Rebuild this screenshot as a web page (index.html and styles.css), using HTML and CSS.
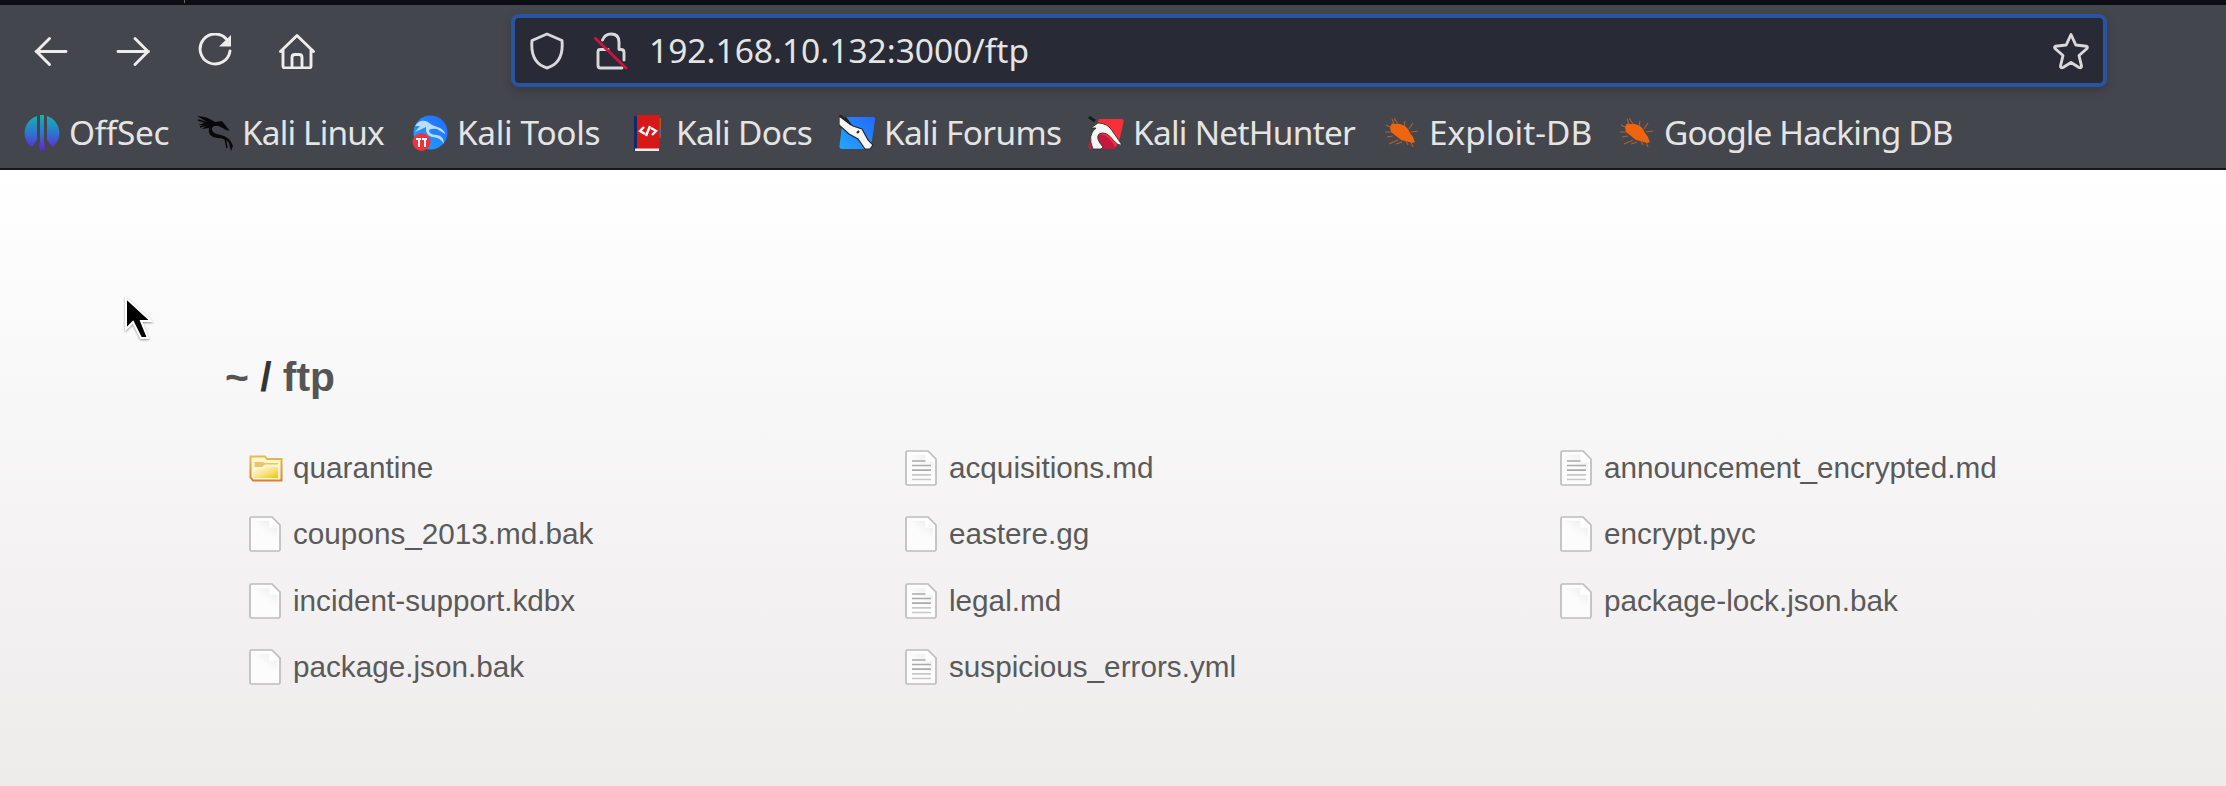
FILE: index.html
```
<!DOCTYPE html>
<html lang="en">
<head>
<meta charset="utf-8">
<title>listing directory /ftp</title>
<link rel="stylesheet" href="styles.css">
</head>
<body>
<svg class="defs" aria-hidden="true">
  <defs>
    <linearGradient id="offsec" x1="0" y1="0" x2="0" y2="1"><stop offset="0" stop-color="#12b5b0"/><stop offset=".5" stop-color="#2d76cf"/><stop offset="1" stop-color="#6a1fd0"/></linearGradient>
    <linearGradient id="blue" x1="0" y1="1" x2="1" y2="0"><stop offset="0" stop-color="#22a7ff"/><stop offset="1" stop-color="#2468ff"/></linearGradient>
    <linearGradient id="gold" x1="0" y1="0" x2="1" y2="1"><stop offset="0" stop-color="#fffbe6"/><stop offset=".5" stop-color="#f9e48c"/><stop offset="1" stop-color="#efc400"/></linearGradient>
    <linearGradient id="goldedge" x1="0" y1="0" x2="0" y2="1"><stop offset="0" stop-color="#e5bd50"/><stop offset="1" stop-color="#dc8030"/></linearGradient>
    <linearGradient id="fold" x1="1" y1="0" x2="0" y2="1"><stop offset="0" stop-color="#dedede"/><stop offset=".55" stop-color="#fafafa"/><stop offset="1" stop-color="#fdfdfd"/></linearGradient>
    <symbol id="page" viewBox="0 0 32 36">
      <path d="M2.5 1H23L31 9V33.5Q31 35 29.5 35H2.500Q1 35 1 33.500V2.500Q1 1 2.500 1Z" fill="#fcfcfc" stroke="#bdbdbd" stroke-width="1.700"/>
      <path d="M5 5H20V12H28V22L18 20Z" fill="url(#fold)" opacity=".6"/>
      <path d="M22 2.500V10H29.500Z" fill="#fff"/>
    </symbol>
    <symbol id="text" viewBox="0 0 32 36">
      <use href="#page"/>
      <path d="M7 11H20.500M7 15.500H26M7 20.200H26" stroke="#aaa" stroke-width="1.700"/>
      <path d="M7 24.800H26M7 29.500H26" stroke="#c8c8c8" stroke-width="1.700"/>
    </symbol>
    <symbol id="folder" viewBox="0 0 34 27">
      <path d="M1.500 1.500H16L18 4H32.500V25.500H4L1.500 22.500Z" fill="#fff5d0" stroke="url(#goldedge)" stroke-width="2"/>
      <path d="M5.500 7H14L16 8H29V9.500H16L13 12H5.500Z" fill="#ecc46c"/>
      <path d="M5 14H14L17 12H29V23H4.500Z" fill="url(#gold)"/>
    </symbol>
    <symbol id="bug" viewBox="0 0 36 36">
      <path d="M6 12 8 8.500 12 9 16 9 21 11 24 14 26 18 29 22 30 25 31 27 28 28 23 26.500 17 25 12 21 7 17Z" fill="#ef650f"/>
      <path d="M10 9 8 4M14 9 10 3M20 11 21 6M6 12 2 10M7 17 1 17M9 21 3 22M14 25 5 29M18 27 12 29M25 14 29 8M27 17 34 16M27 27 29 32M22 26 24 30" fill="none" stroke="#b0602e" stroke-width="1.100"/>
    </symbol>
  </defs>
</svg>

<header class="browser">
  <div class="tabstrip"><i></i></div>
  <div class="toolbar">
    <nav class="nav">
      <svg viewBox="0 0 36 36"><path d="M33 18.500H3M16.500 5.500 3.500 18.500 16.500 31.500"/></svg>
      <svg viewBox="0 0 36 36"><path d="M3 18.500H33.500M20 5.500 33 18.500 20 31.500"/></svg>
      <svg viewBox="0 0 36 36"><path d="M30.500 7.500A15 15 0 1 0 33 18"/><path d="M34 2V13.500H22Z" class="solid"/></svg>
      <svg viewBox="0 0 36 36"><path d="M1.500 18.500 18 2.500 34.500 18.500M4 17V33Q4 35 6 35H30Q32 35 32 33V17M13 35V24.500Q13 21.500 16 21.500H20Q23 21.500 23 24.500V35"/></svg>
    </nav>
    <div class="urlbar">
      <svg class="shield" viewBox="0 0 36 38"><path d="M18 2 33 8.500Q35 31 18 36Q1 31 3 8.500Z"/></svg>
      <svg class="lock" viewBox="0 0 34 38"><path d="M8.500 8Q11 2 17 2Q25 2 25 10V17.500M25 17.500H27Q30 17.500 30 20.500V28M14 17.500H6Q4 17.500 4 20V33.500Q4 36 6.500 36H28"/><path class="slash" d="M1.500 6.500 32 36"/></svg>
      <span class="address">192.168.10.132:3000/ftp</span>
      <svg class="star" viewBox="0 0 38 38"><path d="M19 2.500 23.800 13 34.500 14.200Q36 15 35 16.500L27 23.500 29.500 34Q29.500 36.500 27 35.500L19 30.500 11 35.500Q8.500 36.500 8.500 34L11 23.500 3 16.500Q2 15 3.500 14.200L14.200 13Z"/></svg>
    </div>
  </div>
  <div class="bookmarks">
    <a><svg viewBox="0 0 36 36"><path fill="url(#offsec)" d="M13 1V25L8 32C-3 25-2 6 13 1ZM23 1V25L28 32C39 25 38 6 23 1ZM16 0H20V26L21 34 18 36 15 34 16 26Z"/></svg><span class="snug">OffSec</span></a>
    <a><svg viewBox="0 0 36 36"><path d="M0 1Q10 1 18 7L25 6 33 16 23 11Q14 10 15 15Q16 19 24 20Q33 22 36 31L34 36 32 28Q28 23 20 23Q10 21 12 13L5 14 10 10 1 10 10 7Z" fill="#08090b"/><path d="M1 5 14 9M16 7 31 15M28 23 30 33M3 12 12 9" stroke="#08090b" stroke-width="1.500"/></svg><span class="tightest">Kali Linux</span></a>
    <a><svg viewBox="0 0 36 36"><circle cx="18.500" cy="17.500" r="17" fill="url(#blue)"/><path d="M3 11Q10 1 20 10L28 13Q33 16 33 19L25 14Q17 13 17 16Q18 20 25 20Q32 21 32 29Q28 22 20 22Q13 20 14 12L3 17 8 11Z" fill="#b9dcff"/><circle cx="9.500" cy="27" r="9" fill="#ef3338"/><path d="M4 23H9V25H8V32H6V25H4ZM10 23H15V25H14V32H12V25H10Z" fill="#fff"/></svg><span class="snug">Kali Tools</span></a>
    <a><svg viewBox="0 0 36 36"><path d="M3 1H7V36H3Z" fill="#102a67"/><path d="M6 0H28.500V34H6Z" fill="#d71818"/><path d="M28.500 3H30V23H28.500Z" fill="#a75928"/><path d="M28.500 14H30V20H28.500Z" fill="#386db1"/><path d="M4 33.500H28V36H4Z" fill="#eee"/><path d="M13 12 9 16 14 19M20 13 25 16 21 20M19 11 15 21" fill="none" stroke="#fff" stroke-width="2.400"/></svg><span class="tight">Kali Docs</span></a>
    <a><svg viewBox="0 0 36 36"><path d="M4 2H34Q36.500 2 36 5L32 32Q31 34 29 34H3Q0 34 .5 31Z" fill="url(#blue)"/><path d="M0 1 14 11 23 14 29 25 34 30 31 34 26 34 19 24 10 19 0 10Z" fill="#f5f5f3" stroke="#25272b" stroke-width="1.200"/><path d="M1 0 10 8M6 2 12 10M18 18 20 16" stroke="#222" stroke-width="2"/></svg><span class="tight">Kali Forums</span></a>
    <a><svg viewBox="0 0 36 36"><path d="M11 4H34Q36 4 35.500 7L31 27 26 34H3Q0 34 1 28Z" fill="#f92f38"/><path d="M10 20Q20 17 28 34H3Q0 32 1 27Z" fill="#c5183f"/><path d="M1 2 7 6" stroke="#18191c" stroke-width="3"/><path d="M5 34Q-1 20 8 13L3 13 10 8Q20 8 25 17L34 30Q30 31 26 26Q18 15 11 19Q7 23 15 32L13 34Z" fill="#f6f6f6" stroke="#242328" stroke-width=".8"/></svg><span class="tighter">Kali NetHunter</span></a>
    <a><svg><use href="#bug"/></svg><span>Exploit-DB</span></a>
    <a><svg><use href="#bug"/></svg><span class="tightest">Google Hacking DB</span></a>
  </div>
</header>

<main class="page">
  <h1><a>~</a> / <a>ftp</a></h1>
  <ul class="files">
    <li><svg class="dir"><use href="#folder"/></svg><span>quarantine</span></li>
    <li><svg><use href="#text"/></svg><span>acquisitions.md</span></li>
    <li><svg><use href="#text"/></svg><span>announcement_encrypted.md</span></li>
    <li><svg><use href="#page"/></svg><span>coupons_2013.md.bak</span></li>
    <li><svg><use href="#page"/></svg><span>eastere.gg</span></li>
    <li><svg><use href="#page"/></svg><span>encrypt.pyc</span></li>
    <li><svg><use href="#page"/></svg><span>incident-support.kdbx</span></li>
    <li><svg><use href="#text"/></svg><span>legal.md</span></li>
    <li><svg><use href="#page"/></svg><span>package-lock.json.bak</span></li>
    <li><svg><use href="#page"/></svg><span>package.json.bak</span></li>
    <li><svg><use href="#text"/></svg><span>suspicious_errors.yml</span></li>
  </ul>
</main>
<svg class="cursor" viewBox="0 0 34 50"><path d="M4 3V34L11 27 19 43H26L19 26H29Z"/></svg>
</body>
</html>
```
FILE: styles.css
```
* { box-sizing: border-box; }
body { margin: 0; width: 2226px; height: 786px; overflow: hidden; display: flex; flex-direction: column; }
svg { display: block; flex: none; }
.defs { position: absolute; width: 0; height: 0; }

.browser { flex: none; height: 170px; background: #44464d; border-bottom: 2px solid #17181c; font-family: "Noto Sans", sans-serif; color: #e4e4e3; }
.tabstrip { height: 5px; background: #0d0e13; padding-left: 184px; }
.tabstrip i { display: block; width: 1px; height: 3px; background: #66686c; }
.toolbar { height: 95px; padding-top: 9px; display: flex; }
.nav { width: 511px; height: 74px; padding: 0 0 0 33px; display: flex; align-items: center; gap: 46px; }
.nav svg { width: 36px; height: 36px; fill: none; stroke: #ededeb; stroke-width: 2.9; stroke-linecap: round; stroke-linejoin: round; }
.nav .solid { fill: #ededeb; stroke: none; }
.urlbar { width: 1596px; height: 73px; padding: 0 13px 0 14px; border: 4px solid #2854a2; border-radius: 8px; background: #282a36; box-shadow: 0 4px 10px rgba(0, 0, 0, .18); display: flex; align-items: center; }
.urlbar svg { height: 38px; fill: none; stroke: #d9d9db; stroke-width: 2.9; stroke-linecap: round; stroke-linejoin: round; }
.shield { width: 36px; }
.lock { width: 34px; margin-left: 29px; }
.urlbar .lock .slash { stroke: #cf123f; }
.address { margin-left: 21px; font-size: 33.5px; line-height: 65px; white-space: nowrap; }
.star { width: 38px; margin-left: auto; }
.bookmarks { padding-left: 24px; height: 66px; display: grid; grid-template-columns: 173px 215px 219px 208px 249px 296px 235px 400px; align-items: center; }
.bookmarks a { display: flex; align-items: center; gap: 9px; font-size: 33.4px; line-height: 60px; white-space: nowrap; }
.bookmarks svg { width: 36px; height: 36px; }
.bookmarks span { margin-top: -2px; }
.snug { letter-spacing: -.35px; }
.tight { letter-spacing: -.65px; }
.tighter { letter-spacing: -.72px; }
.tightest { letter-spacing: -.86px; }

.page { flex: 1; padding: 179px 0 0 225px; background: linear-gradient(#fff, #ece9e9 670px); font-family: "Liberation Sans", Arial, sans-serif; color: #343434; }
h1 { margin: 0; font-size: 40.8px; line-height: 56px; font-weight: 700; }
h1 a { color: #555; }
.files { margin: 30px 0 0; padding: 0 0 0 24px; list-style: none; display: grid; grid-template-columns: 656px 655px 600px; grid-auto-rows: 66.3px; }
.files li { display: flex; align-items: center; gap: 12px; font-size: 29.7px; color: #5a5a5a; white-space: nowrap; }
.files svg { width: 32px; height: 36px; }
.files .dir { width: 34px; height: 27px; margin-right: -2px; }
.cursor { position: absolute; left: 122px; top: 295px; width: 34px; height: 50px; filter: drop-shadow(0 1px 1px rgba(0, 0, 0, .4)); }
.cursor path { fill: #000; stroke: #fff; stroke-width: 2; }
```
